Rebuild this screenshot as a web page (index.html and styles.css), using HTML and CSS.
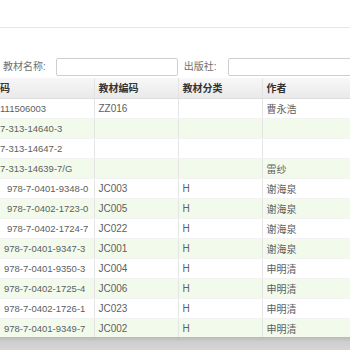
FILE: index.html
```html
<!DOCTYPE html>
<html lang="zh-CN">
<head>
    <meta charset="UTF-8">
    <title>教材列表</title>
    <link rel="stylesheet" href="styles.css">
</head>
<body>
    <div class="topbar"></div>
    <div class="search">
        <label class="search-label">教材名称:</label>
        <input class="search-input name-input" type="text">
        <label class="search-label">出版社:</label>
        <input class="search-input press-input" type="text">
    </div>
    <div class="grid">
        <table class="grid-table">
            <colgroup>
                <col class="col-isbn">
                <col class="col-code">
                <col class="col-type">
                <col class="col-author">
            </colgroup>
            <thead>
                <tr>
                    <th class="cut">码</th>
                    <th>教材编码</th>
                    <th>教材分类</th>
                    <th>作者</th>
                </tr>
            </thead>
            <tbody>
                <tr><td class="cut">111506003</td><td>ZZ016</td><td></td><td>曹永浩</td></tr>
                <tr class="alt"><td class="cut">7-313-14640-3</td><td></td><td></td><td></td></tr>
                <tr><td class="cut">7-313-14647-2</td><td></td><td></td><td></td></tr>
                <tr class="alt"><td class="cut">7-313-14639-7/G</td><td></td><td></td><td>雷纱</td></tr>
                <tr><td class="isbn-wide">978-7-0401-9348-0</td><td>JC003</td><td>H</td><td>谢海泉</td></tr>
                <tr class="alt"><td class="isbn-wide">978-7-0402-1723-0</td><td>JC005</td><td>H</td><td>谢海泉</td></tr>
                <tr><td class="isbn-wide">978-7-0402-1724-7</td><td>JC022</td><td>H</td><td>谢海泉</td></tr>
                <tr class="alt"><td>978-7-0401-9347-3</td><td>JC001</td><td>H</td><td>谢海泉</td></tr>
                <tr><td>978-7-0401-9350-3</td><td>JC004</td><td>H</td><td>申明清</td></tr>
                <tr class="alt"><td>978-7-0402-1725-4</td><td>JC006</td><td>H</td><td>申明清</td></tr>
                <tr><td>978-7-0402-1726-1</td><td>JC023</td><td>H</td><td>申明清</td></tr>
                <tr class="alt"><td>978-7-0401-9349-7</td><td>JC002</td><td>H</td><td>申明清</td></tr>
            </tbody>
        </table>
    </div>
    <div class="hscroll"></div>
</body>
</html>
```

FILE: styles.css
```css
body {
    margin: 0;
    padding: 0;
    width: 350px;
    height: 350px;
    overflow: hidden;
    background-color: #ffffff;
    font-family: "Liberation Sans", "Noto Sans CJK SC", sans-serif;
    font-size: 10px;
    color: #5e5e5e;
}

.topbar {
    height: 27px;
    border-bottom: 1px solid #e6e6e6;
}

.search {
    height: 50px;
    display: flex;
    align-items: flex-end;
    padding: 0 0 2px 3px;
    box-sizing: border-box;
}

.search-label {
    flex: none;
    white-space: nowrap;
    color: #707070;
    line-height: 18px;
}

.search-input {
    flex: none;
    height: 18px;
    box-sizing: border-box;
    border: 1px solid #cfcfcf;
    border-radius: 2px;
    padding: 0 4px;
    background: #ffffff;
}

.name-input {
    width: 122px;
    margin: 0 6px 0 10px;
}

.press-input {
    width: 130px;
    margin-left: 11px;
}

.grid {
    height: 259px;
    overflow: hidden;
}

.grid-table {
    border-collapse: collapse;
    table-layout: fixed;
    width: 360px;
}

.col-isbn { width: 94px; }
.col-code { width: 84px; }
.col-type { width: 84px; }
.col-author { width: 98px; }

.grid-table th,
.grid-table td {
    height: 20px;
    padding: 0 0 0 4px;
    border-right: 1px solid #e4e4e4;
    text-align: left;
    white-space: nowrap;
    overflow: hidden;
    box-sizing: border-box;
}

.grid-table th {
    color: #333333;
    font-weight: bold;
    background: linear-gradient(#f7f7f7, #e9e9e9);
    border-bottom: 1px solid #dddddd;
}

.grid-table td {
    border-bottom: 1px solid #f2f2f2;
}

.grid-table td:first-child {
    font-size: 9.5px;
}

.grid-table .cut {
    padding-left: 0;
}

.grid-table .isbn-wide {
    padding-left: 7px;
}

.alt td {
    background-color: #f2faec;
}

.hscroll {
    height: 13px;
    background: linear-gradient(#b9b9b9, #cdcdcd 35%, #d6d6d6);
}
```
